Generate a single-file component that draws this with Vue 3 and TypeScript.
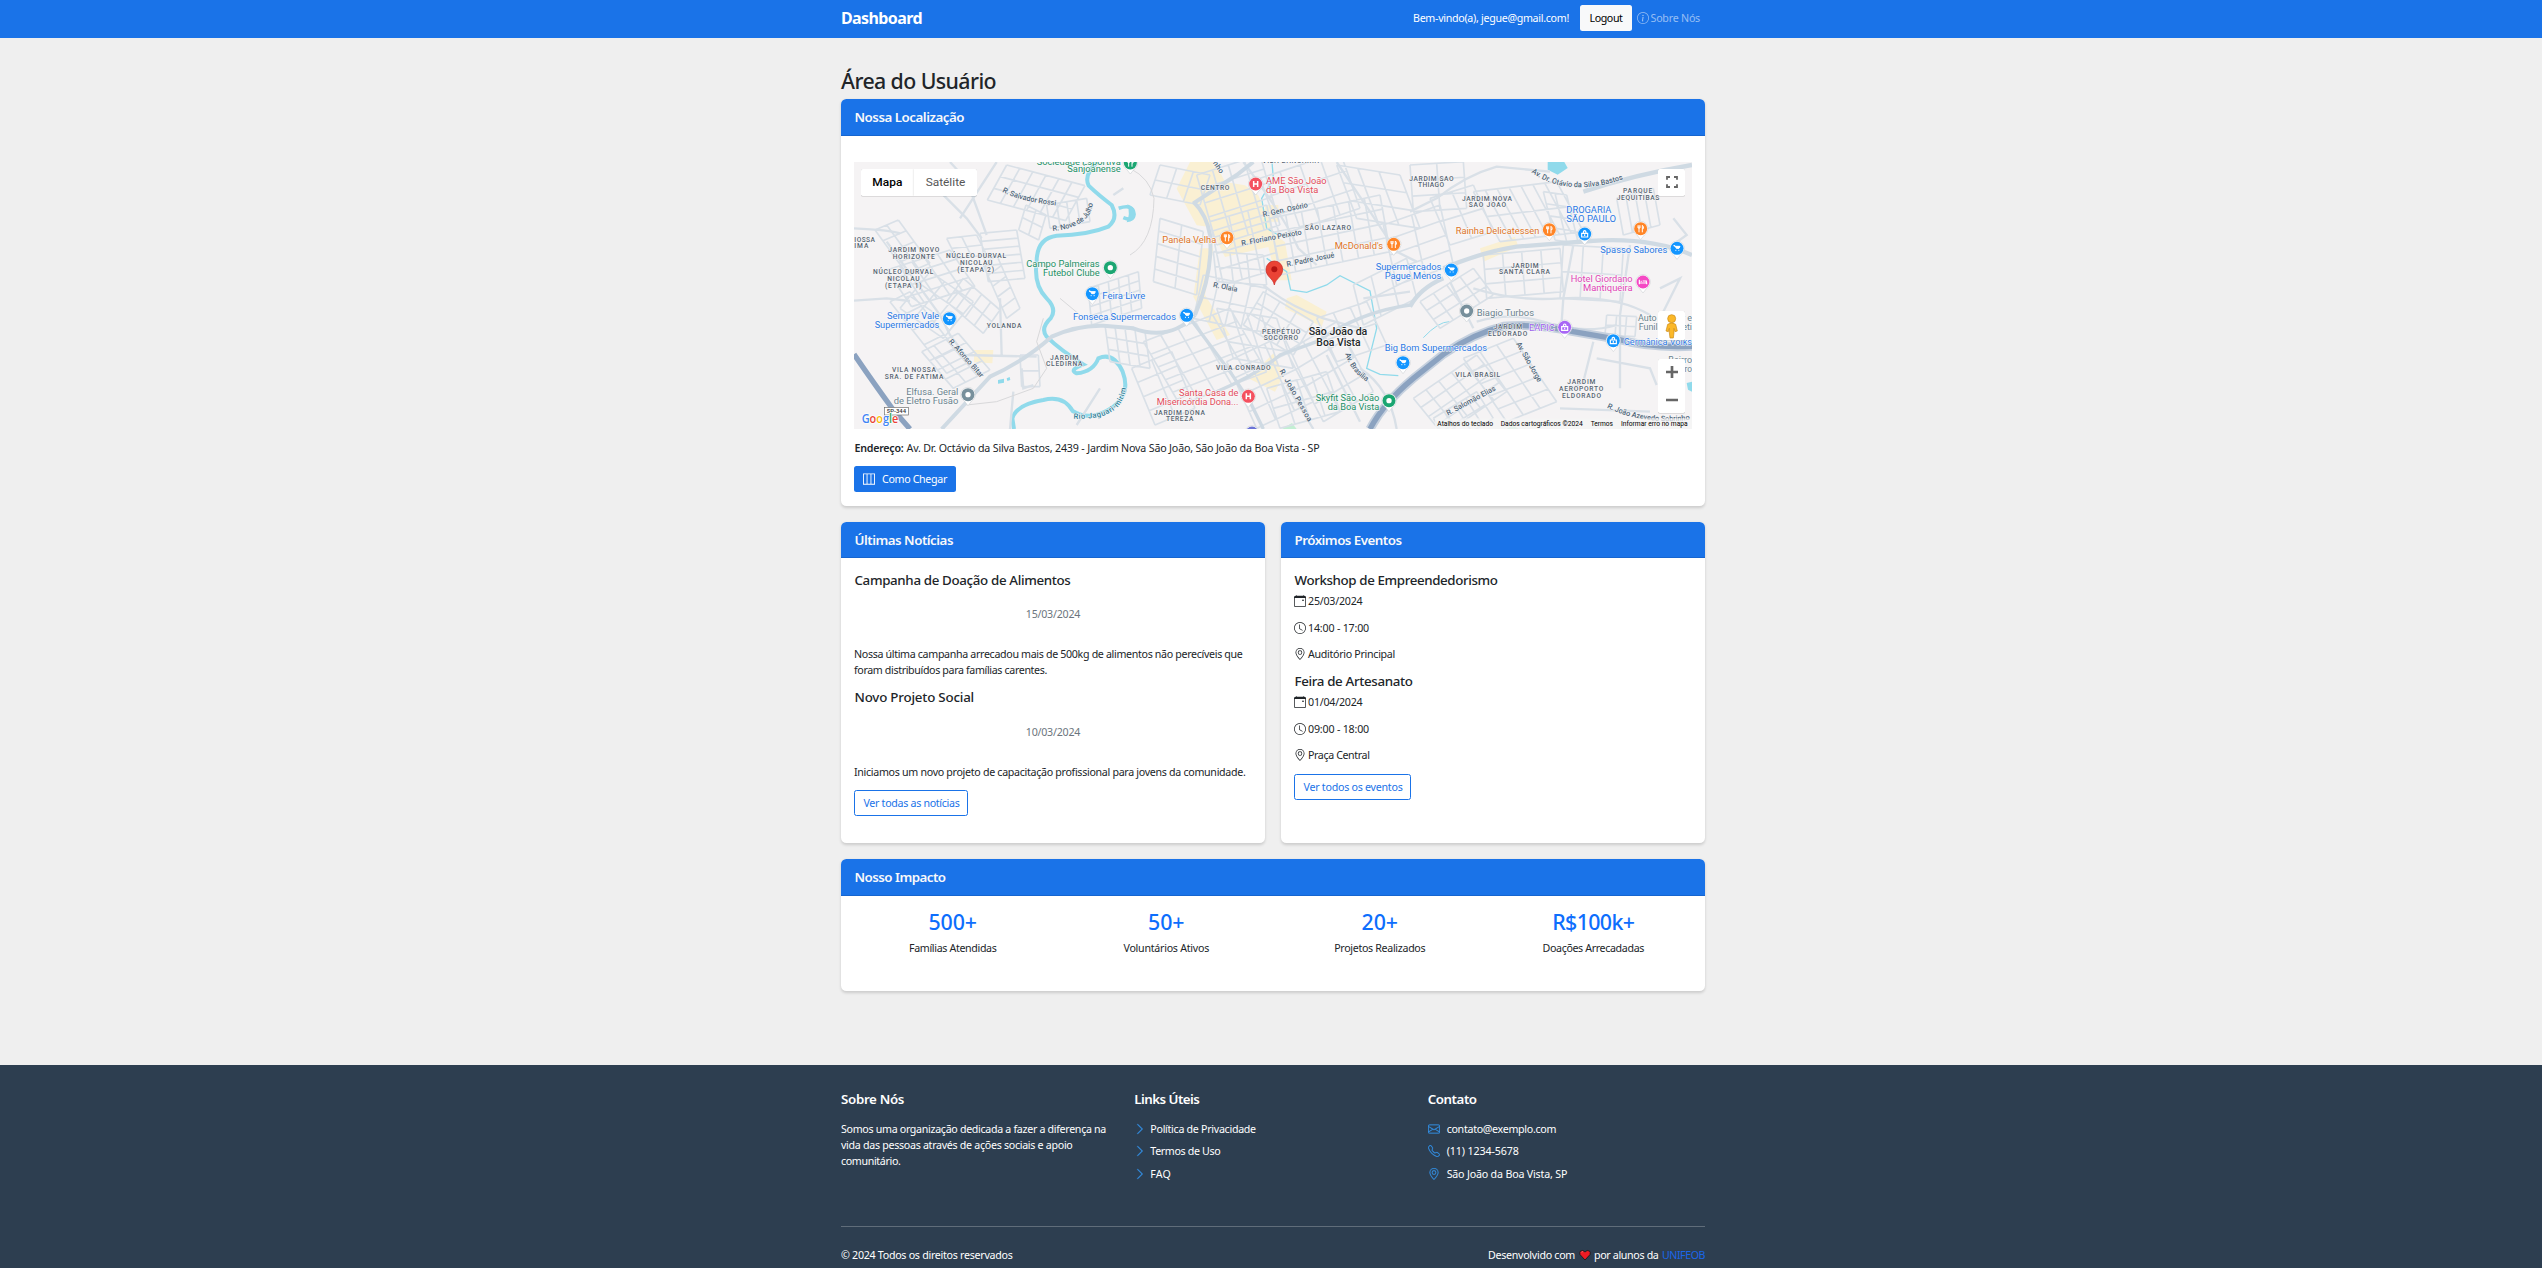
<script setup lang="ts">
import { h, type FunctionalComponent, type ObjectDirective } from 'vue'

/* Tracks a single line of text so that it spans the given width. */
const vFit: ObjectDirective<HTMLElement, number> = {
  mounted(el, { value }) {
    const count = (el.textContent ?? '').length
    const natural = el.getBoundingClientRect().width
    if (count) el.style.letterSpacing = `${(value - natural) / count}px`
  },
}

const GEO = [
  'M12.166 8.94c-.524 1.062-1.234 2.12-1.96 3.07A32 32 0 0 1 8 14.58a32 32 0 0 1-2.206-2.57c-.726-.95-1.436-2.008-1.96-3.07C3.304 7.867 3 6.862 3 6a5 5 0 0 1 10 0c0 .862-.305 1.867-.834 2.94M8 16s6-5.686 6-10A6 6 0 0 0 2 6c0 4.314 6 10 6 10',
  'M8 8a2 2 0 1 1 0-4 2 2 0 0 1 0 4m0 1a3 3 0 1 0 0-6 3 3 0 0 0 0 6',
]
const icons: Record<string, string[]> = {
  geo: GEO,
  clock: [
    'M8 3.5a.5.5 0 0 0-1 0V9a.5.5 0 0 0 .252.434l3.5 2a.5.5 0 0 0 .496-.868L8 8.71z',
    'M8 16A8 8 0 1 0 8 0a8 8 0 0 0 0 16m7-8A7 7 0 1 1 1 8a7 7 0 0 1 14 0',
  ],
  calendar: [
    'M11 6.5a.5.5 0 0 1 .5-.5h1a.5.5 0 0 1 .5.5v1a.5.5 0 0 1-.5.5h-1a.5.5 0 0 1-.5-.5z',
    'M3.5 0a.5.5 0 0 1 .5.5V1h8V.5a.5.5 0 0 1 1 0V1h1a2 2 0 0 1 2 2v11a2 2 0 0 1-2 2H2a2 2 0 0 1-2-2V3a2 2 0 0 1 2-2h1V.5a.5.5 0 0 1 .5-.5M1 4v10a1 1 0 0 0 1 1h12a1 1 0 0 0 1-1V4z',
  ],
  map: [
    'M0 .5H16V15.5H0ZM1.2 1.7V14.3H4.8V1.7ZM6 1.7V14.3H10V1.7ZM11.2 1.7V14.3H14.8V1.7Z',
  ],
  info: [
    'M8 15A7 7 0 1 1 8 1a7 7 0 0 1 0 14m0 1A8 8 0 1 0 8 0a8 8 0 0 0 0 16',
    'm8.93 6.588-2.29.287-.082.38.45.083c.294.07.352.176.288.469l-.738 3.468c-.194.897.105 1.319.808 1.319.545 0 1.178-.252 1.465-.598l.088-.416c-.2.176-.492.246-.686.246-.275 0-.375-.193-.304-.533zM9 4.5a1 1 0 1 1-2 0 1 1 0 0 1 2 0',
  ],
  chevron: [
    'M4.646 1.646a.5.5 0 0 1 .708 0l6 6a.5.5 0 0 1 0 .708l-6 6a.5.5 0 0 1-.708-.708L10.293 8 4.646 2.354a.5.5 0 0 1 0-.708',
  ],
  envelope: [
    'M0 4a2 2 0 0 1 2-2h12a2 2 0 0 1 2 2v8a2 2 0 0 1-2 2H2a2 2 0 0 1-2-2zm2-1a1 1 0 0 0-1 1v.217l7 4.2 7-4.2V4a1 1 0 0 0-1-1zm13 2.383-4.708 2.825L15 11.105zm-.034 6.876-5.64-3.471L8 9.583l-1.326-.795-5.64 3.47A1 1 0 0 0 2 13h12a1 1 0 0 0 .966-.741M1 11.105l4.708-2.897L1 5.383z',
  ],
  phone: [
    'M3.654 1.328a.678.678 0 0 0-1.015-.063L1.605 2.3c-.483.484-.661 1.169-.45 1.77a17.6 17.6 0 0 0 4.168 6.608 17.6 17.6 0 0 0 6.608 4.168c.601.211 1.286.033 1.77-.45l1.034-1.034a.678.678 0 0 0-.063-1.015l-2.307-1.794a.68.68 0 0 0-.58-.122l-2.19.547a1.75 1.75 0 0 1-1.657-.459L5.482 8.062a1.75 1.75 0 0 1-.46-1.657l.548-2.19a.68.68 0 0 0-.122-.58zM1.884.511a1.745 1.745 0 0 1 2.612.163L6.29 2.98c.329.423.445.974.315 1.494l-.547 2.19a.68.68 0 0 0 .178.643l2.457 2.457a.68.68 0 0 0 .644.178l2.189-.547a1.75 1.75 0 0 1 1.494.315l2.306 1.794c.829.645.905 1.87.163 2.611l-1.034 1.034c-.74.74-1.846 1.065-2.877.702a18.6 18.6 0 0 1-7.01-4.42 18.6 18.6 0 0 1-4.42-7.009c-.362-1.03-.037-2.137.703-2.877z',
  ],
}
const Icon: FunctionalComponent<{ name: string; size?: number }> = (props) =>
  h(
    'svg',
    { viewBox: '0 0 16 16', width: props.size ?? 12, height: props.size ?? 12, fill: 'currentColor', 'fill-rule': props.name === 'map' ? 'evenodd' : undefined },
    (icons[props.name] ?? []).map((d) => h('path', { d })),
  )
Icon.props = ['name', 'size']

interface Line { text: string; width: number }
const news: { title: Line; date: string; lines: Line[] }[] = [
  {
    title: { text: 'Campanha de Doação de Alimentos', width: 216 },
    date: '15/03/2024',
    lines: [
      { text: 'Nossa última campanha arrecadou mais de 500kg de alimentos não perecíveis que', width: 388.5 },
      { text: 'foram distribuídos para famílias carentes.', width: 193 },
    ],
  },
  {
    title: { text: 'Novo Projeto Social', width: 119.5 },
    date: '10/03/2024',
    lines: [{ text: 'Iniciamos um novo projeto de capacitação profissional para jovens da comunidade.', width: 391.5 }],
  },
]
const events: { title: Line; rows: (Line & { icon: string })[] }[] = [
  {
    title: { text: 'Workshop de Empreendedorismo', width: 203 },
    rows: [
      { icon: 'calendar', text: '25/03/2024', width: 54.5 },
      { icon: 'clock', text: '14:00 - 17:00', width: 61 },
      { icon: 'geo', text: 'Auditório Principal', width: 87 },
    ],
  },
  {
    title: { text: 'Feira de Artesanato', width: 118 },
    rows: [
      { icon: 'calendar', text: '01/04/2024', width: 54.5 },
      { icon: 'clock', text: '09:00 - 18:00', width: 61 },
      { icon: 'geo', text: 'Praça Central', width: 61.5 },
    ],
  },
]
const stats = [
  { value: '500+', vw: 48.5, label: 'Famílias Atendidas', lw: 87.5 },
  { value: '50+', vw: 36.5, label: 'Voluntários Ativos', lw: 85.5 },
  { value: '20+', vw: 36.5, label: 'Projetos Realizados', lw: 91 },
  { value: 'R$100k+', vw: 82, label: 'Doações Arrecadadas', lw: 101.5 },
]
const about: Line[] = [
  { text: 'Somos uma organização dedicada a fazer a diferença na', width: 265 },
  { text: 'vida das pessoas através de ações sociais e apoio', width: 231.5 },
  { text: 'comunitário.', width: 59.5 },
]
const links: Line[] = [
  { text: 'Política de Privacidade', width: 105.5 },
  { text: 'Termos de Uso', width: 70 },
  { text: 'FAQ', width: 20.5 },
]
const contacts: (Line & { icon: string })[] = [
  { icon: 'envelope', text: 'contato@exemplo.com', width: 109.5 },
  { icon: 'phone', text: '(11) 1234-5678', width: 72 },
  { icon: 'geo', text: 'São João da Boa Vista, SP', width: 120.5 },
]

/* ---- Map ---- */
const BLUE = '#2b78e4', GREEN = '#1a8f66', RED = '#e34b5a', ORANGE = '#dd7427', GRAY = '#6a828e', PINK = '#e044b5', PURPLE = '#9d5fea'

/* Street grids: origin, two edge vectors, and the number of cells along each. */
type Grid = [number, number, number, number, number, number, number, number]
const gridPath = ([ox, oy, ux, uy, vx, vy, n, m]: Grid): string => {
  let d = ''
  for (let i = 0; i <= n; i++) {
    const x = ox + (ux * i) / n, y = oy + (uy * i) / n
    d += `M${x} ${y}l${vx} ${vy}`
  }
  for (let j = 0; j <= m; j++) {
    const x = ox + (vx * j) / m, y = oy + (vy * j) / m
    d += `M${x} ${y}l${ux} ${uy}`
  }
  return d
}
const grids: Grid[] = [
  [470, 30, 235, 62, -58, 105, 6, 3],
  [528, 150, 60, 30, -22, 75, 2, 2],
  [590, 150, 120, -20, 10, 70, 4, 1],
  [75, 225, 70, -30, 95, 130, 2, 4],
  [110, 345, 190, -60, 75, 110, 5, 4],
  [150, 460, 130, 90, 90, -110, 3, 3],
  [120, 440, 170, 215, 60, -30, 5, 1],
  [215, 590, 110, -55, 95, 110, 3, 4],
  [390, 235, 110, -10, 25, 145, 1, 6],
  [340, 370, 110, 95, -50, 70, 4, 2],
  [400, 330, 70, 160, 40, -30, 5, 1],
  [290, 250, 90, -10, 30, 60, 2, 2],
  [510, 600, 55, 0, 5, 95, 1, 2],
  [715, 400, 150, -50, 10, 110, 5, 4],
  [765, 510, 120, 20, 15, 110, 4, 3],
  [930, 30, 150, 30, -30, 90, 3, 2],
  [1040, 60, 190, -60, 60, 210, 4, 5],
  [930, 190, 130, 40, -20, 190, 2, 5],
  [1080, 200, 170, -50, 40, 190, 3, 4],
  [1230, 70, 240, -80, 60, 170, 4, 3],
  [1260, 190, 330, -70, 30, 170, 7, 4],
  [1460, 30, 190, 30, 60, 160, 3, 3],
  [1060, 360, 190, 40, -30, 130, 4, 2],
  [1090, 290, 150, 10, 10, 90, 3, 2],
  [880, 560, 260, -100, 110, 190, 5, 5],
  [845, 640, 120, -50, 70, 170, 2, 4],
  [1100, 460, 180, 30, 50, 150, 4, 3],
  [1240, 410, 150, 90, -60, 100, 3, 3],
  [1130, 620, 170, -80, 90, 200, 3, 4],
  [1310, 590, 150, -90, 110, 210, 3, 4],
  [1400, 490, 150, -50, 60, 130, 3, 2],
  [1250, 700, 180, -50, 40, 120, 4, 2],
  [1510, 390, 160, -80, 30, 120, 3, 2],
  [1600, 210, 170, -60, 40, 180, 2, 4],
  [1680, 30, 160, -10, 10, 140, 2, 3],
  [1870, 110, 250, -30, 80, 150, 7, 2],
  [1740, 130, 130, -40, 60, 140, 2, 2],
  [2080, 110, 70, 10, 35, 145, 2, 4],
  [1900, 300, 230, -20, 10, 130, 4, 3],
  [1710, 440, 160, -100, 60, 80, 4, 3],
  [2300, 130, 110, -30, 20, 110, 4, 1],
  [2140, 270, 180, 10, -10, 160, 3, 2],
  [1690, 730, 190, -130, 90, 110, 5, 4],
  [1840, 610, 150, -60, 130, 190, 3, 5],
  [1750, 790, 130, -80, 50, 80, 4, 2],
  [2270, 480, 90, 5, -5, 60, 3, 2],
]
const gridRoads = grids.map(gridPath).join('')

interface MapText { x: number; y: number; w: number; t: string; c?: string }
const at = (dx: number, rows: [number, number, number, string, string?][]): MapText[] =>
  rows.map(([x1, x2, y, t, c]) => ({ x: x1 + dx, y, w: x2 - x1, t, c }))

const places: MapText[] = [
  ...at(0, [
    [560, 812, 29, 'Sociedade Esportiva', GREEN], [652, 812, 52, 'Sanjoanense', GREEN],
    [529, 749, 337, 'Campo Palmeiras', GREEN], [579, 749, 364, 'Futebol Clube', GREEN],
    [757, 886, 431, 'Feira Livre', BLUE], [111, 268, 491, 'Sempre Vale', BLUE],
    [74, 268, 518, 'Supermercados', BLUE], [669, 978, 495, 'Fonseca Supermercados', BLUE],
    [169, 325, 720, 'Elfusa. Geral', GRAY], [131, 325, 747, 'de Eletro Fusão', GRAY],
  ]),
  ...at(840, [
    [408, 590, 86, 'AME São João', RED], [408, 565, 113, 'da Boa Vista', RED],
    [97, 259, 263, 'Panela Velha', ORANGE], [614, 759, 281, "McDonald's", ORANGE],
    [737, 934, 345, 'Supermercados', BLUE], [764, 934, 372, 'Pague Menos', BLUE],
    [764, 1071, 589, 'Big Bom Supermercados', BLUE],
    [147, 325, 723, 'Santa Casa de', RED], [80, 325, 751, 'Misericórdia Dona...', RED],
    [557, 748, 737, 'Skyfit São João', GREEN], [593, 748, 764, 'da Boa Vista', GREEN],
  ]),
  ...at(1680, [
    [469, 604, 173, 'DROGARIA', BLUE], [469, 618, 201, 'SÃO PAULO', BLUE],
    [137, 388, 238, 'Rainha Delicatessen', ORANGE], [571, 772, 294, 'Spasso Sabores', BLUE],
    [482, 668, 380, 'Hotel Giordano', PINK], [519, 668, 408, 'Mantiqueira', PINK],
    [200, 372, 482, 'Biagio Turbos', GRAY], [357, 434, 528, 'EAPIC', PURPLE],
    [641, 846, 570, 'Germânica Volks', BLUE], [684, 846, 497, 'Auto Center e', GRAY],
    [686, 846, 524, 'Funilaria Eleti', GRAY], [775, 846, 623, 'Bairro', GRAY], [808, 846, 652, 'Bro', GRAY],
  ]),
]
const districts: MapText[] = [
  ...at(0, [
    [13, 75, 262, 'IOSSA'], [13, 55, 280, 'IMA'], [115, 268, 291, 'JARDIM NOVO'], [128, 254, 311, 'HORIZONTE'],
    [288, 468, 309, 'NÚCLEO DURVAL'], [330, 427, 329, 'NICOLAU'], [322, 432, 350, '(ETAPA 2)'],
    [69, 250, 358, 'NÚCLEO DURVAL'], [112, 209, 378, 'NICOLAU'], [105, 215, 398, '(ETAPA 1)'],
    [410, 514, 520, 'YOLANDA'], [600, 685, 615, 'JARDIM'], [588, 697, 634, 'CLEDIRNA'],
    [126, 258, 652, 'VILA NOSSA'], [104, 280, 672, 'SRA. DE FATIMA'],
  ]),
  ...at(840, [
    [397, 567, 25, 'VILA BANCÁRIA'], [212, 298, 105, 'CENTRO'], [524, 663, 225, 'SÃO LAZARO'],
    [396, 511, 536, 'PERPÉTUO'], [401, 504, 556, 'SOCORRO'], [258, 422, 644, 'VILA CONRADO'],
    [72, 225, 779, 'JARDIM DONA'], [108, 190, 798, 'TEREZA'],
  ]),
  ...at(1680, [
    [-2, 131, 77, 'JARDIM SAO'], [24, 102, 97, 'THIAGO'], [156, 306, 137, 'JARDIM NOVA'], [176, 288, 157, 'SAO JOAO'],
    [639, 727, 115, 'PARQUE'], [620, 748, 135, 'JEQUITIBAS'], [303, 386, 338, 'JARDIM'], [267, 420, 357, 'SANTA CLARA'],
    [251, 336, 522, 'JARDIM'], [234, 352, 542, 'ELDORADO'], [136, 270, 666, 'VILA BRASIL'],
    [472, 556, 688, 'JARDIM'], [447, 580, 708, 'AEROPORTO'], [456, 573, 728, 'ELDORADO'],
  ]),
]
const streets: { d: string; w: number; t: string; c?: string }[] = [
  { d: 'M456 110Q510 140 624 152', w: 168, t: 'R. Salvador Rossi' },
  { d: 'M608 228Q735 215 728 130', w: 160, t: 'R. Nove de Julho' },
  { d: 'M295 560L394 672', w: 146, t: 'R. Afonso Bitar' },
  { d: 'M670 791Q835 800 828 672', w: 205, t: 'Rio Jaguari-mirim', c: '#2b7f98' },
  { d: 'M1088 24L1114 62', w: 40, t: 'nho' },
  { d: 'M1240 186L1376 156', w: 138, t: 'R. Gen. Osório' },
  { d: 'M1175 272L1358 238', w: 184, t: 'R. Floriano Peixoto' },
  { d: 'M1311 335L1456 306', w: 146, t: 'R. Padre Josué' },
  { d: 'M1088 396L1163 411', w: 74, t: 'R. Olaia' },
  { d: 'M1486 596Q1500 650 1556 684', w: 108, t: 'Av. Brasília' },
  { d: 'M1288 648L1376 804', w: 176, t: 'R. João Pessoa' },
  { d: 'M2044 52Q2150 130 2324 72', w: 288, t: 'Av. Dr. Otávio da Silva Bastos' },
  { d: 'M1998 566L2066 686', w: 134, t: 'Av. São Jorge' },
  { d: 'M1794 782L1940 704', w: 164, t: 'R. Salomão Elias' },
  { d: 'M2270 758Q2380 812 2524 794', w: 256, t: 'R. João Azevedo Sobrinho' },
]
type Glyph = 'cart' | 'fork' | 'dot' | 'bag' | 'med' | 'bed'
const pins: { x: number; y: number; c: string; g: Glyph }[] = [
  { x: 841, y: 24, c: '#1ba672', g: 'fork' }, { x: 781, y: 338, c: '#1ba672', g: 'dot' },
  { x: 727, y: 416, c: '#1295ff', g: 'cart' }, { x: 298, y: 491, c: '#1295ff', g: 'cart' },
  { x: 354, y: 719, c: '#78909c', g: 'dot' }, { x: 1217, y: 87, c: '#f4515f', g: 'med' },
  { x: 1131, y: 248, c: '#ff8527', g: 'fork' }, { x: 1631, y: 268, c: '#ff8527', g: 'fork' },
  { x: 1010, y: 481, c: '#1295ff', g: 'cart' }, { x: 1659, y: 623, c: '#1295ff', g: 'cart' },
  { x: 1195, y: 724, c: '#f4515f', g: 'med' }, { x: 1617, y: 737, c: '#1ba672', g: 'dot' },
  { x: 1206, y: 834, c: '#6b74d6', g: 'dot' }, { x: 2098, y: 224, c: '#ff8527', g: 'fork' },
  { x: 2204, y: 237, c: '#1295ff', g: 'bag' }, { x: 2372, y: 221, c: '#ff8527', g: 'fork' },
  { x: 2481, y: 280, c: '#1295ff', g: 'cart' }, { x: 1804, y: 345, c: '#1295ff', g: 'cart' },
  { x: 2379, y: 381, c: '#f548c4', g: 'bed' }, { x: 1850, y: 468, c: '#78909c', g: 'dot' },
  { x: 2144, y: 517, c: '#a866f5', g: 'bag' }, { x: 2290, y: 557, c: '#1295ff', g: 'bag' },
]
const credits = at(1680, [
  [82, 249, 812, 'Atalhos do teclado'], [272, 518, 812, 'Dados cartográficos ©2024'],
  [542, 609, 812, 'Termos'], [633, 833, 812, 'Informar erro no mapa'],
])
</script>

<template>
  <div class="page">
    <header class="navbar">
      <div class="container nav-inner">
        <strong class="brand"><span v-fit="81">Dashboard</span></strong>
        <span class="welcome"><span v-fit="156">Bem-vindo(a), jegue@gmail.com!</span></span>
        <button class="logout"><span v-fit="33">Logout</span></button>
        <a class="nav-about"><Icon name="info" /><span v-fit="49.5">Sobre Nós</span></a>
      </div>
    </header>

    <main class="container main">
      <h2><span v-fit="155">Área do Usuário</span></h2>

      <section class="card location">
        <div class="card-header"><span v-fit="109.5">Nossa Localização</span></div>
        <div class="location-body">
          <svg class="map" viewBox="12 21 2514 801" preserveAspectRatio="none">
            <rect x="12" y="21" width="2514" height="801" fill="#f5f3f4" />
            <g fill="#faf0d3">
              <path d="M1020 21l75 0 30 60 60 10 40 30 50 120 30 20 20 115-45 0-25-100-130 30-45-90-40-5-60-110z" />
              <path d="M1050 280l40 0-25 140 75 120-40 15-70-130z" />
              <path d="M1310 430l30-10 90 50-15 45-110-55z" />
              <path d="M1195 670l75-75 30 65-25 50z" />
              <path d="M1245 150l40 0 0 50-40 0z" />
              <path d="M372 585l58 0-3 40-55-3z" /><path d="M1890 280l105-35 10 30-105 45z" />
            </g>
            <g fill="#c3efd3">
              <path d="M1296 822l30-18 14 18z" /><path d="M1970 822q18-16 36 0z" />
            </g>
            <g class="water">
              <path d="M742 21Q700 60 716 92Q745 120 785 150Q806 190 775 215Q715 240 620 242Q560 250 560 320Q550 390 590 430Q622 462 602 490Q570 520 590 545Q630 585 700 628Q655 645 680 655Q730 650 745 610Q790 590 818 650Q845 720 780 762Q720 800 668 768Q640 720 580 735Q500 748 487 790L492 822" stroke-width="12" />
              <path d="M806 160Q850 145 852 178Q850 200 820 188" stroke-width="11" />
              <path d="M1266 21L1270 70L1235 130L1250 220L1285 240M1250 310L1310 350L1322 405L1370 412L1430 390L1470 362L1560 408L1580 520L1550 640L1590 658L1645 662" stroke-width="4" />
              <path d="M1720 548Q1765 500 1798 500" stroke-width="3" />
            </g>
            <g fill="#90daeb">
              <path d="M2093 21l50 0 10 18-30 20-30-15z" />
              <path d="M832 148q24 8 24 30t-26 24q12-24 2-54z" />
              <path d="M444 675l18-4 0 12-18 3zM470 670l9-4 2 9-9 3z" /><path d="M2510 684l16-4 0 30-12-6z" />
            </g>
            <path class="roads" :d="gridRoads" />
            <g class="roads mid">
              <path d="M270 110L350 190L395 250M300 21L350 75L410 240M12 220Q120 225 150 235M12 437L110 430L180 438" />
              <path d="M110 260L270 480L300 540L345 600L560 605M450 430L455 600M440 21L330 190M820 100L790 120" />
              <path d="M680 810L750 700M490 710L480 822M515 640L520 700L550 690" />
              <path d="M1180 21Q1300 180 1345 280L1400 330M1460 21L1560 170L1640 290L1700 320M1240 390Q1310 450 1420 490L1530 520" />
              <path d="M1540 430L1680 410M1530 640Q1620 700 1640 822M1430 600L1530 800M1390 822L1310 690" />
              <path d="M1680 170L1760 130Q1850 60 1940 35L2100 50M1800 380L1870 520M2170 270L2140 430L2135 500M2430 400L2490 370L2440 470" />
              <path d="M2340 270L2310 480L2310 700M2230 560L2200 680L2150 710M2240 610L2400 640L2420 690M2130 760L2400 770M2470 190L2510 240L2440 290" />
              <path d="M1870 400Q2000 440 2130 430Q2300 420 2400 480M1880 500Q1980 470 2080 500Q2200 540 2300 510" />
            </g>
            <g class="roads main-road">
              <path d="M275 822L420 665Q520 620 605 545Q680 510 760 512L850 520Q960 560 1035 480" />
              <path d="M1035 480Q1090 350 1080 240Q1070 180 1030 140M1030 145L1160 60L1210 21" />
              <path d="M1020 490L1140 650L1200 740L1240 822M1100 710Q1220 660 1290 600L1400 560Q1530 470 1680 450" stroke-width="10" />
              <path d="M1680 455Q1710 400 1780 370M1780 340Q1900 290 2000 275L2220 258Q2400 245 2526 300M2200 110Q2350 60 2526 30" stroke-width="13" />
            </g>
            <g fill="none" stroke="#8ba2c0" stroke-width="16">
              <path d="M12 598Q75 690 130 765L180 822" />
              <path d="M1560 822Q1600 745 1690 670L1780 598Q1870 535 1960 514Q2060 505 2170 530L2300 552Q2400 580 2526 574" stroke="#c5d0de" stroke-width="27" />
              <path d="M1560 822Q1600 745 1690 670L1780 598Q1870 535 1960 514Q2060 505 2170 530L2300 552Q2400 580 2526 574" />
            </g>
            <path d="M580 490L560 560L590 640L550 700L440 740L350 750M630 430L690 480M840 40Q900 70 912 130Q910 260 840 300" fill="none" stroke="#d8d8da" stroke-width="3" />
            <g>
              <rect x="103" y="757" width="72" height="23" fill="#fff" stroke="#6a6a6a" stroke-width="2" />
              <text x="110" y="775" textLength="58" lengthAdjust="spacingAndGlyphs" font-size="18" font-weight="500" fill="#333">SP-344</text>
            </g>

            <g class="districts">
              <text v-for="(p, i) in districts" :key="i" :x="p.x" :y="p.y" :textLength="p.w">{{ p.t }}</text>
            </g>
            <g class="streets">
              <template v-for="(s, i) in streets" :key="i">
                <path :id="'street-' + i" :d="s.d" fill="none" stroke="none" />
                <text :fill="s.c ?? '#4f6577'"><textPath :href="'#street-' + i" :textLength="s.w">{{ s.t }}</textPath></text>
              </template>
            </g>
            <g class="places">
              <text v-for="(p, i) in places" :key="i" :x="p.x" :y="p.y" :textLength="p.w" lengthAdjust="spacingAndGlyphs" :fill="p.c">{{ p.t }}</text>
            </g>
            <g class="city">
              <text x="1376" y="540" textLength="176" lengthAdjust="spacingAndGlyphs">São João da</text>
              <text x="1399" y="572" textLength="133" lengthAdjust="spacingAndGlyphs">Boa Vista</text>
            </g>

            <g v-for="(p, i) in pins" :key="i" :transform="`translate(${p.x} ${p.y})`">
              <path d="M0 33L-11 19A22 22 0 1 1 11 19Z" fill="#fff" stroke="#c4c9cd" stroke-width="1.5" />
              <circle r="19.5" :fill="p.c" />
              <circle v-if="p.g === 'dot'" r="8" fill="#fff" />
              <path v-else-if="p.g === 'cart'" d="M-10-8h4l4 8h8l3-6H-5ZM-5 6h3M4 6h3" fill="#fff" stroke="#fff" stroke-width="3" />
              <path v-else-if="p.g === 'fork'" d="M-5 11V-10M-8-10v8h6v-8M5 11V-10q5 4 3 10h-3" fill="none" stroke="#fff" stroke-width="3" />
              <path v-else-if="p.g === 'med'" d="M-6-9V9M6-9V9M-6 0H6" fill="none" stroke="#fff" stroke-width="4.5" />
              <path v-else-if="p.g === 'bed'" d="M-11-7V7M-11 3H11V7M-1-3h11v6M-7-2h3" fill="none" stroke="#fff" stroke-width="3.5" />
              <path v-else d="M-9-2H9V9H-9ZM-4-3q0-7 4-7t4 7M0 1v5" fill="none" stroke="#fff" stroke-width="3.5" />
            </g>
            <path d="M1273 390C1269 369 1248 366 1248 343A25 25 0 0 1 1298 343C1298 366 1277 369 1273 390Z" fill="#ea4335" stroke="#c5221f" stroke-width="2" />
            <circle cx="1273" cy="343" r="9" fill="#b31412" />

            <text class="google" x="35" y="805" textLength="110" lengthAdjust="spacingAndGlyphs"><tspan fill="#4285f4">G</tspan><tspan fill="#ea4335">o</tspan><tspan fill="#fbbc05">o</tspan><tspan fill="#4285f4">g</tspan><tspan fill="#34a853">l</tspan><tspan fill="#ea4335">e</tspan></text>
            <rect x="1755" y="790" width="771" height="32" fill="#f5f5f5" fill-opacity=".7" />
            <g class="credits">
              <text v-for="p in credits" :key="p.t" :x="p.x" :y="p.y" :textLength="p.w" lengthAdjust="spacingAndGlyphs">{{ p.t }}</text>
            </g>

            <g class="controls">
              <rect x="33" y="42" width="348" height="81" rx="5" />
              <rect x="2424" y="42" width="81" height="81" rx="5" />
              <rect x="2424" y="468" width="81" height="88" rx="5" />
              <rect x="2424" y="612" width="81" height="162" rx="5" />
            </g>
            <path d="M190 43V122" stroke="#e6e6e6" stroke-width="2" />
            <text x="67" y="92" textLength="90" lengthAdjust="spacingAndGlyphs" font-size="35" font-weight="500" fill="#000">Mapa</text>
            <text x="227" y="92" textLength="119" lengthAdjust="spacingAndGlyphs" font-size="35" fill="#565656">Satélite</text>
            <path d="M2451 74V66H2460M2472 66H2481V74M2451 88V96H2460M2481 88V96H2472" fill="none" stroke="#666" stroke-width="5.5" />
            <path d="M2448 651h36M2466 633v36M2448 735h36" stroke="#666" stroke-width="8" />
            <path d="M2453 508q12-9 24 0l5 20-7 2-3-10v13l-2 16h-10l-2-16v-13l-3 10-7-2z" fill="#fbb828" stroke="#c98a18" stroke-width="2" />
            <circle cx="2465" cy="491" r="12" fill="#fbb828" stroke="#c98a18" stroke-width="2" />
          </svg>
          <p class="address"><b v-fit="49">Endereço:</b><span v-fit="413">Av. Dr. Octávio da Silva Bastos, 2439 - Jardim Nova São João, São João da Boa Vista - SP</span></p>
          <button class="btn primary"><Icon name="map" /><span v-fit="65">Como Chegar</span></button>
        </div>
      </section>

      <div class="columns">
        <section class="card">
          <div class="card-header short"><span v-fit="98.5">Últimas Notícias</span></div>
          <div class="card-body">
            <article v-for="item in news" :key="item.date" class="news">
              <h5><span v-fit="item.title.width">{{ item.title.text }}</span></h5>
              <time><span v-fit="54.5">{{ item.date }}</span></time>
              <p><span v-for="l in item.lines" :key="l.text" v-fit="l.width" class="line">{{ l.text }}</span></p>
            </article>
            <button class="btn outline"><span v-fit="96">Ver todas as notícias</span></button>
          </div>
        </section>
        <section class="card">
          <div class="card-header short"><span v-fit="107">Próximos Eventos</span></div>
          <div class="card-body">
            <article v-for="item in events" :key="item.title.text" class="event">
              <h5><span v-fit="item.title.width">{{ item.title.text }}</span></h5>
              <ul>
                <li v-for="r in item.rows" :key="r.text"><Icon :name="r.icon" /><span v-fit="r.width">{{ r.text }}</span></li>
              </ul>
            </article>
            <button class="btn outline"><span v-fit="99">Ver todos os eventos</span></button>
          </div>
        </section>
      </div>

      <section class="card impact">
        <div class="card-header"><span v-fit="91">Nosso Impacto</span></div>
        <div class="stats">
          <div v-for="s in stats" :key="s.label">
            <h3><span v-fit="s.vw">{{ s.value }}</span></h3>
            <p><span v-fit="s.lw">{{ s.label }}</span></p>
          </div>
        </div>
      </section>
    </main>

    <footer>
      <div class="container">
        <div class="footer-columns">
          <div>
            <h5><span v-fit="63">Sobre Nós</span></h5>
            <p><span v-for="l in about" :key="l.text" v-fit="l.width" class="line">{{ l.text }}</span></p>
          </div>
          <div>
            <h5><span v-fit="65">Links Úteis</span></h5>
            <ul class="links">
              <li v-for="l in links" :key="l.text"><Icon name="chevron" /><a v-fit="l.width">{{ l.text }}</a></li>
            </ul>
          </div>
          <div>
            <h5><span v-fit="49">Contato</span></h5>
            <ul class="contacts">
              <li v-for="c in contacts" :key="c.text"><Icon :name="c.icon" /><span v-fit="c.width">{{ c.text }}</span></li>
            </ul>
          </div>
        </div>
        <div class="footer-bottom">
          <span v-fit="171.5">© 2024 Todos os direitos reservados</span>
          <div class="credit">
            <span v-fit="87">Desenvolvido com</span>
            <svg viewBox="0 0 12 12" width="12" height="12"><path d="M6 11L1 5.6Q.2 3.4 1.5 2Q4 .5 6 3Q8 .5 10.5 2Q11.8 3.4 11 5.6Z" fill="#ed1c24" stroke="#1c1c1c" stroke-width=".9" /><path d="M2.5 3.2Q3.2 2.4 4 2.8" fill="none" stroke="#ff8b8b" stroke-width=".7" /></svg>
            <span v-fit="64.5">por alunos da</span>
            <a v-fit="43">UNIFEOB</a>
          </div>
        </div>
      </div>
    </footer>
  </div>
</template>

<style>
body { margin: 0; background: #efefef; overflow: hidden; }
</style>

<style scoped>
.page { width: 100%; height: 1268px; overflow: hidden; background: #efefef; color: #212529; font: 10.67px/16px 'Noto Sans', 'Open Sans', sans-serif; display: flex; flex-direction: column; }
.page :deep(svg) { flex: none; display: block; }
h2, h3, h5, p, ul { margin: 0; padding: 0; }
ul { list-style: none; }
button { font: inherit; box-sizing: border-box; height: 26px; padding: 0; border-radius: 2.5px; border: 1px solid transparent; display: flex; align-items: center; white-space: nowrap; }
span, a, b { white-space: nowrap; }
.container { width: 864px; margin: 0 auto; position: relative; left: 2px; }
.navbar { height: 38px; background: #1a73e8; color: #fff; flex: none; }
.nav-inner { height: 36px; display: flex; align-items: center; }
.brand { font-size: 16px; font-weight: 700; margin-right: auto; }
.welcome { margin-right: 11px; }
.logout { background: #f8f9fa; color: #000; width: 52px; justify-content: center; }
.nav-about { display: flex; align-items: center; gap: 2px; margin: 0 5px 0 4.5px; color: rgba(255, 255, 255, .55); }
h2 { font-size: 21.33px; line-height: 26px; font-weight: 500; padding-top: 30px; margin-bottom: 5px; }
.card { background: #fff; border-radius: 5.33px; overflow: hidden; box-shadow: 0 1.5px 3px rgba(0, 0, 0, .15); box-sizing: border-box; }
.card-header { height: 37px; box-sizing: border-box; background: #1a73e8; border-bottom: 1px solid #1665cf; color: #f8f9fa; font-size: 13.33px; font-weight: 600; line-height: 16px; padding: 10px 13px 0 13.5px; }
.card-header.short { height: 36px; }
.location { height: 407px; }
.location-body { padding: 26px 13px 0; }
.map { width: 838px; height: 267px; font-family: Roboto, sans-serif; }
.address { margin-top: 11px; display: flex; gap: 3px; padding-left: .5px; }
.address b { font-weight: 600; }
.btn { margin-top: 10px; }
.btn.primary { width: 102px; background: #1a73e8; color: #fff; padding-left: 8px; gap: 7px; }
.btn.outline { background: #fff; border-color: #1a73e8; color: #1a73e8; padding: 0 7.5px 0 8.5px; }
.columns { display: grid; grid-template-columns: 1fr 1fr; gap: 16px; margin: 16px 0; height: 321px; }
.card-body { padding: 14px 13px 0; }
h5 { font-size: 13.33px; line-height: 16px; font-weight: 500; }
.card-body h5 { padding-left: .5px; }
.news + .news { margin-top: 11px; }
.news time { display: block; text-align: center; margin-top: 18px; color: #6c757d; }
.news p { margin-top: 24px; }
.news + .news time { margin-top: 19px; }
.line { display: table; }
.event + .event { margin-top: 10.67px; }
.event ul { margin-top: 5px; display: grid; gap: 10.67px; }
.event li { display: flex; align-items: center; gap: 2px; height: 16px; }
.event + .event + .btn { margin-top: 10.67px; }
.impact { height: 132px; }
.stats { display: grid; grid-template-columns: repeat(4, 213.5px); padding: 13px 5px 0; text-align: center; }
.stats h3 { font-size: 21.33px; line-height: 26px; font-weight: 500; color: #0d6efd; }
.stats p { margin-top: 5px; }
footer { margin-top: 74px; flex: 1; background: #2d3e50; color: #fff; }
.footer-columns { display: grid; grid-template-columns: repeat(3, 293.33px); height: 161px; box-sizing: border-box; padding-top: 26px; }
footer h5 { font-weight: 600; margin-bottom: 14px; }
footer ul { display: grid; gap: 6.4px; }
footer li { display: flex; align-items: center; height: 16px; }
footer li :deep(svg) { color: #3490e6; stroke: #3490e6; stroke-width: .25; margin-right: 7px; }
footer .links :deep(svg) { margin-right: 4px; stroke-width: .6; }
.footer-bottom { border-top: 1px solid #606d7a; padding-top: 20px; display: flex; justify-content: space-between; }
.credit { display: flex; align-items: center; gap: 3.5px; height: 16px; }
.credit a { color: #1a66e8; }
.water { fill: none; stroke: #90daeb; }
.roads { fill: none; stroke: #d9e0e7; stroke-width: 5; }
.roads.mid { stroke-width: 7; }
.roads.main-road { stroke: #cfdae3; stroke-width: 12; }
.map text { paint-order: stroke; }
.districts text { font-size: 20px; font-weight: 500; fill: #566470; stroke: #f8f7f8; stroke-width: 3px; }
.streets text { font-size: 22.5px; font-weight: 500; stroke: #f4f5f7; stroke-width: 3px; }
.places text { font-size: 28px; stroke: #fafafa; stroke-width: 3.5px; }
.city text { font-size: 31px; font-weight: 500; fill: #25282b; stroke: #fafafa; stroke-width: 4px; }
.google { font-family: 'Open Sans', sans-serif; font-size: 35px; font-weight: 600; stroke: #fff; stroke-width: 4px; }
.credits text { font-size: 20px; fill: #000; }
.controls rect { fill: #fff; filter: drop-shadow(0 1px 2px rgba(0, 0, 0, .3)); }
</style>
